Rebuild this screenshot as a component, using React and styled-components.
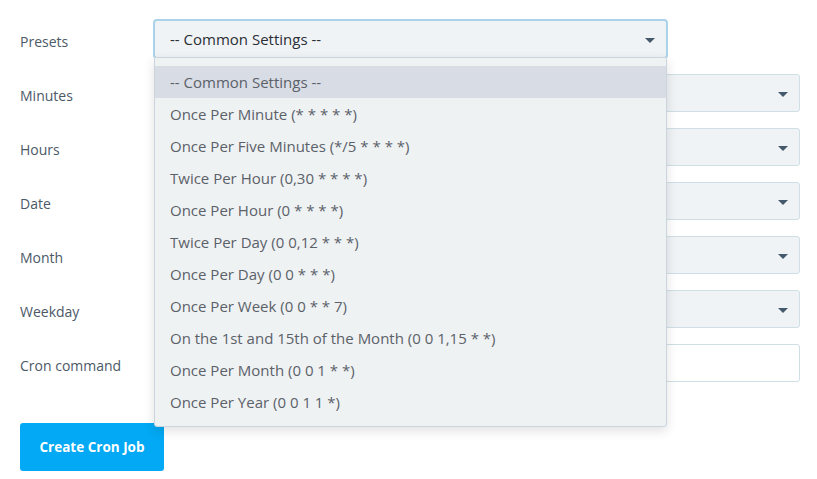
import React from 'react';
import styled, { createGlobalStyle } from 'styled-components';

const GlobalStyle = createGlobalStyle`
body {
    margin: 0;
    background: #ffffff;
    font-family: "Open Sans", "Noto Sans", sans-serif;
}
`

const Form = styled.div`
padding: 20px 17px 0 20px;
display: flex;
flex-direction: column;
`

const Row = styled.div`
display: grid;
grid-template-columns: 134px 1fr;
align-items: center;
height: 38px;
margin-bottom: 16px;
`

const Label = styled.label`
font-size: 14px;
color: #4c5967;
margin-top: 4px;
`

const Control = styled.div`
position: relative;
`

const Select = styled.div`
position: relative;
box-sizing: border-box;
height: 38px;
width: ${props => props.width || '100%'};
background: #f0f3f5;
border: 1px solid ${props => props.focused ? '#a9d3ea' : '#cfdfe5'};
box-shadow: ${props => props.focused ? '0 0 0 1px #a9d3ea' : 'none'};
border-radius: 3px;
padding: 0 15px;
display: flex;
align-items: center;
font-size: 15px;
color: #2a2f36;
`

const Caret = styled.span`
position: absolute;
right: 11px;
top: 17px;
width: 0;
height: 0;
border-left: 5px solid transparent;
border-right: 5px solid transparent;
border-top: 5px solid #44596b;
`

const Input = styled.div`
box-sizing: border-box;
height: 38px;
background: #ffffff;
border: 1px solid #cfdfe5;
border-radius: 3px;
`

const Menu = styled.ul`
position: absolute;
z-index: 2;
top: 37px;
left: 0;
width: 513px;
box-sizing: border-box;
margin: 0;
padding: 8px 0;
list-style: none;
background: #eff2f3;
border: 1px solid #ccd5dd;
border-radius: 0 0 3px 3px;
box-shadow: 0 4px 12px rgba(0, 0, 0, 0.12);
`

const Option = styled.li`
height: 32px;
line-height: 32px;
padding: 0 15px;
font-size: 15px;
color: #5b6169;
background: ${props => props.active ? '#d8dce4' : 'transparent'};
`

const Button = styled.button`
margin-top: 25px;
width: 144px;
height: 48px;
border: none;
border-radius: 3px;
background: #03a9f4;
color: #ffffff;
font-family: "Open Sans", "Noto Sans", sans-serif;
font-weight: bold;
font-size: 13.5px;
`

const presets = [
    '-- Common Settings --',
    'Once Per Minute (* * * * *)',
    'Once Per Five Minutes (*/5 * * * *)',
    'Twice Per Hour (0,30 * * * *)',
    'Once Per Hour (0 * * * *)',
    'Twice Per Day (0 0,12 * * *)',
    'Once Per Day (0 0 * * *)',
    'Once Per Week (0 0 * * 7)',
    'On the 1st and 15th of the Month (0 0 1,15 * *)',
    'Once Per Month (0 0 1 * *)',
    'Once Per Year (0 0 1 1 *)',
]

const fields = ['Minutes', 'Hours', 'Date', 'Month', 'Weekday']

const App = () => (
    <Form>
        <GlobalStyle />
        <Row>
            <Label>Presets</Label>
            <Control>
                <Select focused width="513px">
                    -- Common Settings --
                    <Caret />
                </Select>
                <Menu>
                    {presets.map((p, i) => (
                        <Option key={i} active={i === 0}>{p}</Option>
                    ))}
                </Menu>
            </Control>
        </Row>
        {fields.map(f => (
            <Row key={f}>
                <Label>{f}</Label>
                <Control>
                    <Select>
                        <Caret />
                    </Select>
                </Control>
            </Row>
        ))}
        <Row>
            <Label>Cron command</Label>
            <Control>
                <Input />
            </Control>
        </Row>
        <div>
            <Button>Create Cron Job</Button>
        </div>
    </Form>
)

export default App
